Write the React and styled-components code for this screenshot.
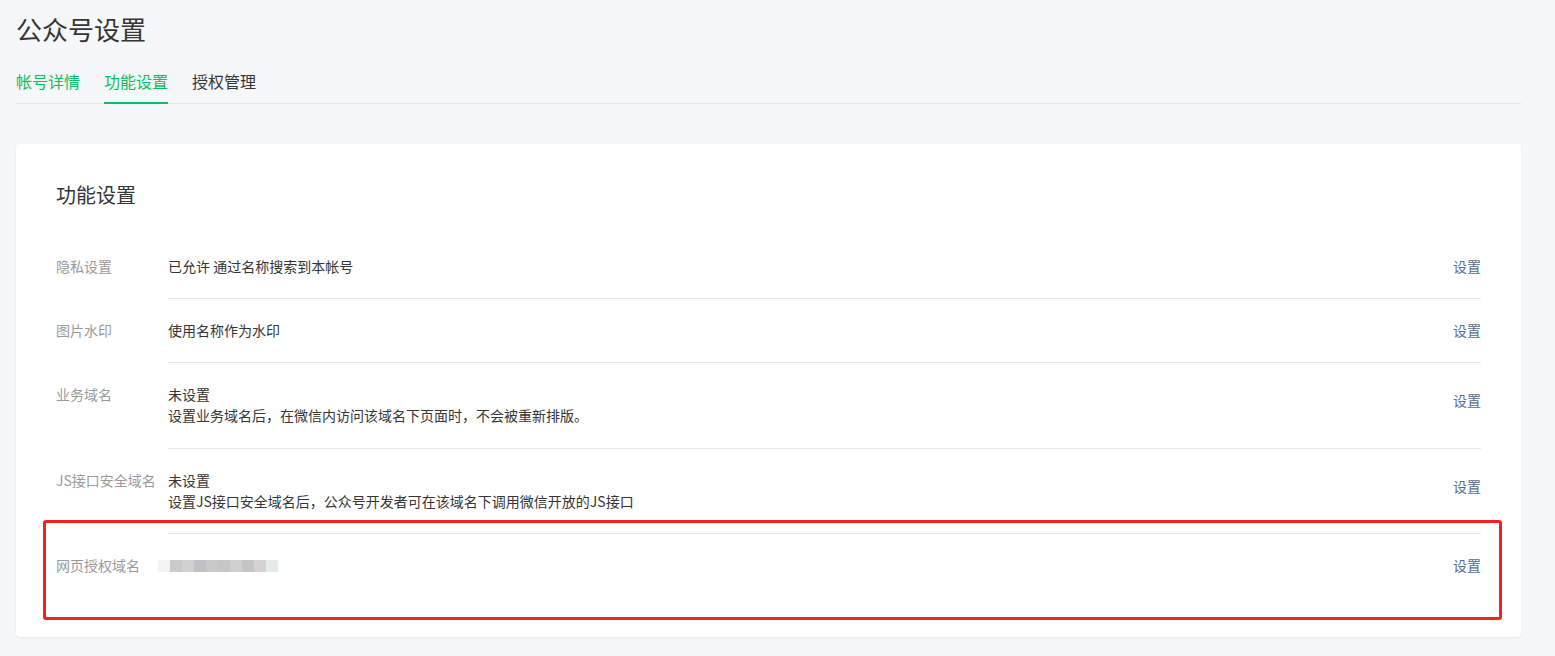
import React from "react";
import styled, { createGlobalStyle } from "styled-components";

const Global = createGlobalStyle`
  html, body { margin: 0; padding: 0; background: #f6f7f9; }
  body { font-family: "Noto Sans CJK SC", "Noto Sans", "Liberation Sans", sans-serif; color: #353535; }
  * { box-sizing: border-box; }
`;

const Page = styled.div`
  padding: 11px 34px 20px 16px;
  min-height: 656px;
`;

const Title = styled.h1`
  margin: 0;
  font-size: 26px;
  line-height: 36px;
  font-weight: 400;
  color: #353535;
`;

const TabBar = styled.div`
  display: flex;
  gap: 24px;
  margin-top: 22px;
  border-bottom: 1px solid #e4e6e9;
`;

const Tab = styled.div`
  font-size: 16px;
  line-height: 24px;
  padding-bottom: 9px;
  margin-bottom: -1px;
  border-bottom: 2px solid ${(p) => (p.$active ? "#07c160" : "transparent")};
  color: ${(p) => (p.$green ? "#07c160" : "#353535")};
`;

const Card = styled.section`
  position: relative;
  margin-top: 40px;
  background: #fff;
  border-radius: 4px;
  box-shadow: 0 1px 2px rgba(150, 150, 150, 0.15);
  padding: 37px 40px 40px 40px;
`;

const CardTitle = styled.h2`
  margin: 0 0 26px;
  font-size: 20px;
  line-height: 28px;
  font-weight: 400;
  color: #353535;
`;

const Row = styled.div`
  display: flex;
  font-size: 14px;
  line-height: 21px;
`;

const Label = styled.div`
  width: 112px;
  flex-shrink: 0;
  padding: 21px 0;
  color: #9a9a9a;
  white-space: nowrap;
`;

const Body = styled.div`
  flex: 1;
  display: flex;
  align-items: flex-start;
  padding: 21px 0 ${(p) => (p.$tall ? 22 : 21)}px;
  border-bottom: ${(p) => (p.$last ? "none" : "1px solid #e7e7e7")};
`;

const Value = styled.div`
  flex: 1;
  color: #353535;
`;

const Link = styled.a`
  color: #576b95;
  text-decoration: none;
  margin-top: ${(p) => p.$offset || 0}px;
  cursor: pointer;
`;

const Masked = styled.div`
  display: flex;
  margin: 5px 0 0 -10px;
  height: 12px;
`;

const Pixel = styled.span`
  width: 12px;
  height: 12px;
  background: ${(p) => p.$c};
`;

const Highlight = styled.div`
  position: absolute;
  left: 27px;
  top: 376px;
  width: 1459px;
  height: 100px;
  border: 3px solid #f5221b;
  border-radius: 3px;
  pointer-events: none;
`;

const pixels = ["#f4f3f2", "#c8cbcd", "#d3d1d0", "#bfc2c5", "#c9c9c9", "#c6c6c6", "#d2d0cf", "#c4c5c7", "#d6d2d1", "#e4e9ea"];

const rows = [
  { label: "隐私设置", lines: ["已允许 通过名称搜索到本帐号"] },
  { label: "图片水印", lines: ["使用名称作为水印"] },
  { label: "业务域名", lines: ["未设置", "设置业务域名后，在微信内访问该域名下页面时，不会被重新排版。"], offset: 6, tall: true },
  { label: "JS接口安全域名", lines: ["未设置", "设置JS接口安全域名后，公众号开发者可在该域名下调用微信开放的JS接口"], offset: 6 },
];

export default function App() {
  return (
    <>
      <Global />
      <Page>
        <Title>公众号设置</Title>
        <TabBar>
          <Tab $green>帐号详情</Tab>
          <Tab $green $active>功能设置</Tab>
          <Tab>授权管理</Tab>
        </TabBar>
        <Card>
          <CardTitle>功能设置</CardTitle>
          {rows.map((r) => (
            <Row key={r.label}>
              <Label>{r.label}</Label>
              <Body $tall={r.tall}>
                <Value>
                  {r.lines.map((l) => (
                    <div key={l}>{l}</div>
                  ))}
                </Value>
                <Link $offset={r.offset}>设置</Link>
              </Body>
            </Row>
          ))}
          <Row>
            <Label>网页授权域名</Label>
            <Body $last>
              <Value>
                <Masked>
                  {pixels.map((c, i) => (
                    <Pixel key={i} $c={c} />
                  ))}
                </Masked>
              </Value>
              <Link>设置</Link>
            </Body>
          </Row>
          <Highlight />
        </Card>
      </Page>
    </>
  );
}
